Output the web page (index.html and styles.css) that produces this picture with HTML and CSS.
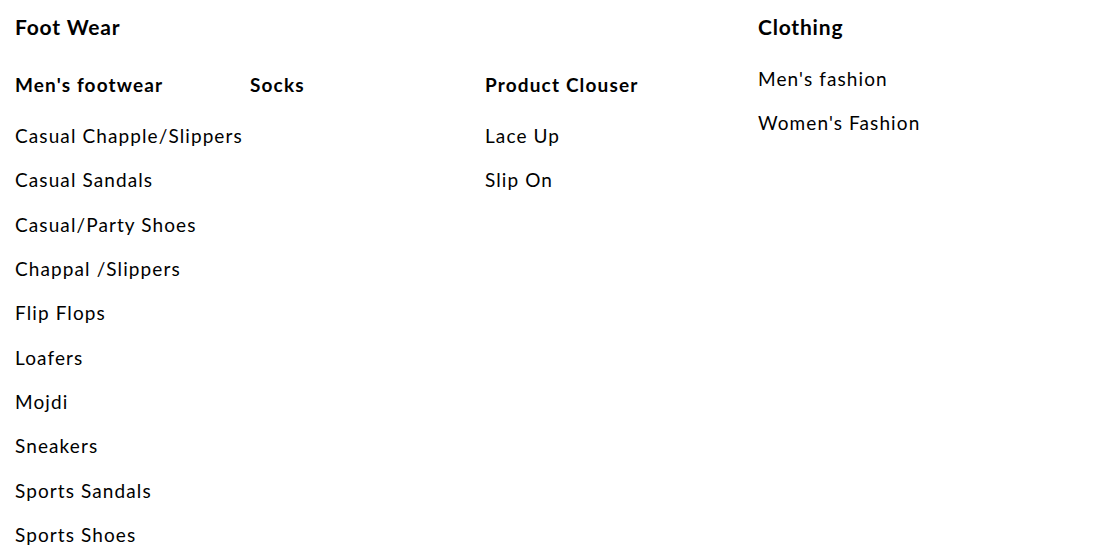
FILE: index.html
```html
<!DOCTYPE html>
<html>
<head>
<meta charset="utf-8">
<link rel="stylesheet" href="styles.css">
</head>
<body>
<div class="menu">
  <section class="group group-footwear">
    <h2 class="group-title">Foot Wear</h2>
    <div class="subcols">
      <div class="subcol">
        <h3 class="subcol-title">Men's footwear</h3>
        <ul class="links">
          <li>Casual Chapple/Slippers</li>
          <li>Casual Sandals</li>
          <li>Casual/Party Shoes</li>
          <li>Chappal /Slippers</li>
          <li>Flip Flops</li>
          <li>Loafers</li>
          <li>Mojdi</li>
          <li>Sneakers</li>
          <li>Sports Sandals</li>
          <li>Sports Shoes</li>
        </ul>
      </div>
      <div class="subcol">
        <h3 class="subcol-title">Socks</h3>
      </div>
      <div class="subcol">
        <h3 class="subcol-title">Product Clouser</h3>
        <ul class="links">
          <li>Lace Up</li>
          <li>Slip On</li>
        </ul>
      </div>
    </div>
  </section>
  <section class="group group-clothing">
    <h2 class="group-title">Clothing</h2>
    <ul class="links links-direct">
      <li>Men's fashion</li>
      <li>Women's Fashion</li>
    </ul>
  </section>
</div>
</body>
</html>
```
FILE: styles.css
```css
html, body {
  margin: 0;
  padding: 0;
  background: #fff;
  overflow: hidden;
}
body {
  font-family: Lato, "Open Sans", sans-serif;
  color: #000;
}
.menu {
  display: flex;
  padding: 12px 15px 0;
}
.group-footwear {
  width: 743px;
}
.group-title {
  margin: 0;
  font-size: 21px;
  line-height: 30px;
  font-weight: 700;
  letter-spacing: 0.8px;
}
.subcols {
  display: grid;
  grid-template-columns: repeat(3, 235px);
  margin-top: 29px;
}
.subcol-title {
  margin: 0;
  font-size: 19px;
  line-height: 27px;
  font-weight: 700;
  letter-spacing: 1.15px;
}
.links {
  list-style: none;
  margin: 24px 0 0;
  padding: 0;
}
.links-direct {
  margin-top: 23px;
}
.links li {
  font-size: 19px;
  line-height: 27px;
  letter-spacing: 1.1px;
  margin-bottom: 17.33px;
  white-space: nowrap;
}
```
